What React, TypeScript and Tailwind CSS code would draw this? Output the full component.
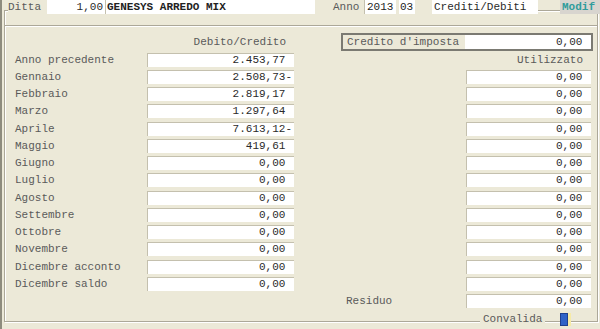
import React from "react";

const rows: { label: string; val: string; neg?: boolean; right: "head" | "field" | "residuo" }[] = [
  { label: "Anno precedente", val: "2.453,77", right: "head" },
  { label: "Gennaio", val: "2.508,73", neg: true, right: "field" },
  { label: "Febbraio", val: "2.819,17", right: "field" },
  { label: "Marzo", val: "1.297,64", right: "field" },
  { label: "Aprile", val: "7.613,12", neg: true, right: "field" },
  { label: "Maggio", val: "419,61", right: "field" },
  { label: "Giugno", val: "0,00", right: "field" },
  { label: "Luglio", val: "0,00", right: "field" },
  { label: "Agosto", val: "0,00", right: "field" },
  { label: "Settembre", val: "0,00", right: "field" },
  { label: "Ottobre", val: "0,00", right: "field" },
  { label: "Novembre", val: "0,00", right: "field" },
  { label: "Dicembre acconto", val: "0,00", right: "field" },
  { label: "Dicembre saldo", val: "0,00", right: "field" },
];

function Field({ text, w }: { text: string; w: string }) {
  return (
    <div
      className={`${w} h-[14px] bg-white border-t border-l border-[#c4c0ae] text-right pr-[2px] leading-[13px] text-[#2a2a2a] whitespace-pre`}
    >
      {text}
    </div>
  );
}

export default function App() {
  return (
    <div
      className="w-[600px] h-[329px] bg-[#ECE9D8] border-l-2 border-[#8e8c7e] overflow-hidden text-[11px] relative"
      style={{ fontFamily: '"Liberation Mono", "Courier New", monospace' }}
    >
      {/* header row */}
      <div className="relative z-10 flex h-[15px] leading-[14px] text-[#5a5a5a]">
        <div className="w-[6px] h-[10px]" />
        <div className="w-[39px] bg-[#ECE9D8]">Ditta</div>
        <div className="w-[58px] h-[14px] bg-white text-right pr-[2px] text-[#2a2a2a]">1,00</div>
        <div className="w-[210px] h-[14px] bg-white border-l border-[#c4c0ae] pl-[1px] font-bold text-[#222]">
          GENESYS ARREDO MIX
        </div>
        <div className="w-[49px] bg-[#ECE9D8] pl-[18px]">Anno</div>
        <div className="w-[32px] h-[14px] bg-white border-l border-[#c4c0ae] pl-[2px] text-[#222]">2013</div>
        <div className="w-[3px] bg-[#ECE9D8]" />
        <div className="w-[16px] h-[14px] bg-white pl-[1px] text-[#222]">03</div>
        <div className="w-[17px] bg-[#ECE9D8]" />
        <div className="w-[106px] h-[14px] bg-white pl-[2px] text-[#2a2a2a]">Crediti/Debiti</div>
        <div className="w-[22px]" />
        <div className="w-[40px] h-[14px] bg-[#d8d5cf] pl-[2px] font-bold text-[#2f9c9c]">Modif</div>
      </div>

      {/* frame */}
      <div className="relative ml-[2px] mt-[-5px] w-[594px] h-[312px] border border-[#aca899] shadow-[inset_1px_1px_0_#fff,1px_1px_0_#fff] flex flex-col">
        <div className="mt-[14px] h-[2px] border-t border-[#aca899] border-b border-b-white" />

        {/* column headers + credito box */}
        <div className="mt-[6px] flex h-[18px] items-center">
          <div className="w-[142px]" />
          <div className="w-[147px] text-right pr-[8px] text-[#5a5a5a] leading-[14px]">Debito/Credito</div>
          <div className="w-[47px]" />
          <div className="w-[252px] h-[18px] border-2 border-[#7b7a72] flex">
            <div className="w-[123px] h-[14px] pl-[4px] leading-[14px] text-[#5a5a5a] border-r border-white">
              Credito d'imposta
            </div>
            <div className="w-[125px] h-[14px] bg-white text-right pr-[2px] leading-[14px] text-[#2a2a2a] whitespace-pre">
              {"0,00 "}
            </div>
          </div>
        </div>

        {/* rows */}
        <div className="mt-[1.5px] flex flex-col">
          {rows.map((r) => (
            <div key={r.label} className="flex h-[17.25px] items-start">
              <div className="w-[142px] pl-[10px] leading-[14px] text-[#5a5a5a] whitespace-pre">{r.label}</div>
              <Field w="w-[147px]" text={r.val + (r.neg ? "-" : " ")} />
              <div className="w-[47px]" />
              <div className="w-[250px] flex">
                {r.right === "head" ? (
                  <div className="w-full text-right pr-[8px] leading-[14px] text-[#5a5a5a]">Utilizzato</div>
                ) : (
                  <div className="ml-auto">
                    <Field w="w-[125px]" text="0,00 " />
                  </div>
                )}
              </div>
            </div>
          ))}
          <div className="flex h-[17.25px] items-start">
            <div className="w-[142px]" />
            <div className="w-[147px]" />
            <div className="w-[47px]" />
            <div className="w-[250px] flex">
              <div className="w-[125px] pl-[5px] leading-[14px] text-[#5a5a5a]">Residuo</div>
              <Field w="w-[125px]" text="0,00 " />
            </div>
          </div>
        </div>

        {/* Convalida legend on bottom border */}
        <div className="absolute left-[475px] bottom-[-5px] flex items-center h-[14px]">
          <div className="bg-[#ECE9D8] pl-[3px] pr-[3px] leading-[14px] text-[#5a5a5a]">Convalida</div>
          <div className="ml-[15px] flex h-[13px]">
            <div className="w-[8px] h-[13px] bg-[#2f62c7] border border-[#1e3f8f]" />
            <div className="w-[3px] h-[13px] bg-[#f6eaa6]" />
          </div>
        </div>
      </div>
    </div>
  );
}
